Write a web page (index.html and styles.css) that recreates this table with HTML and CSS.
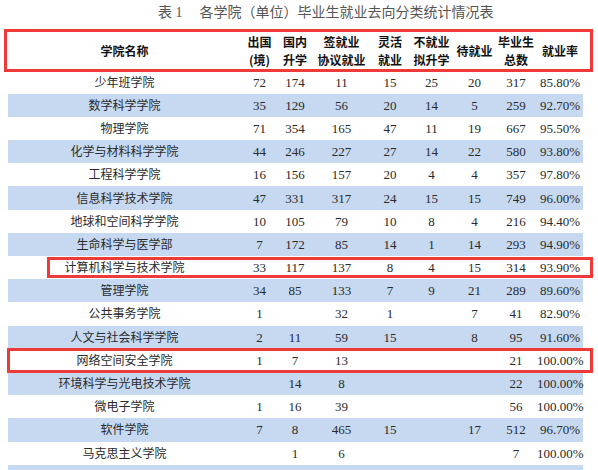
FILE: index.html
```html
<!DOCTYPE html>
<html lang="zh-CN">
<head>
<meta charset="utf-8">
<title>表1 各学院（单位）毕业生就业去向分类统计情况表</title>
<link rel="stylesheet" href="styles.css">
</head>
<body>
<div class="page">
  <div class="title">表 1<span class="gap"></span>各学院（单位）毕业生就业去向分类统计情况表</div>
  <table class="stats">
    <colgroup>
      <col class="c-name"><col class="c1"><col class="c2"><col class="c3"><col class="c4"><col class="c5"><col class="c6"><col class="c7"><col class="c8">
    </colgroup>
    <thead>
      <tr>
        <th><span class="ln">学院名称</span></th>
        <th><span class="ln">出国</span><span class="ln">(境)</span></th>
        <th><span class="ln">国内</span><span class="ln">升学</span></th>
        <th><span class="ln">签就业</span><span class="ln">协议就业</span></th>
        <th><span class="ln">灵活</span><span class="ln">就业</span></th>
        <th><span class="ln">不就业</span><span class="ln">拟升学</span></th>
        <th><span class="ln">待就业</span></th>
        <th><span class="ln">毕业生</span><span class="ln">总数</span></th>
        <th><span class="ln">就业率</span></th>
      </tr>
    </thead>
    <tbody>
      <tr><td>少年班学院</td><td>72</td><td>174</td><td>11</td><td>15</td><td>25</td><td>20</td><td>317</td><td>85.80%</td></tr>
      <tr><td>数学科学学院</td><td>35</td><td>129</td><td>56</td><td>20</td><td>14</td><td>5</td><td>259</td><td>92.70%</td></tr>
      <tr><td>物理学院</td><td>71</td><td>354</td><td>165</td><td>47</td><td>11</td><td>19</td><td>667</td><td>95.50%</td></tr>
      <tr><td>化学与材料科学学院</td><td>44</td><td>246</td><td>227</td><td>27</td><td>14</td><td>22</td><td>580</td><td>93.80%</td></tr>
      <tr><td>工程科学学院</td><td>16</td><td>156</td><td>157</td><td>20</td><td>4</td><td>4</td><td>357</td><td>97.80%</td></tr>
      <tr><td>信息科学技术学院</td><td>47</td><td>331</td><td>317</td><td>24</td><td>15</td><td>15</td><td>749</td><td>96.00%</td></tr>
      <tr><td>地球和空间科学学院</td><td>10</td><td>105</td><td>79</td><td>10</td><td>8</td><td>4</td><td>216</td><td>94.40%</td></tr>
      <tr><td>生命科学与医学部</td><td>7</td><td>172</td><td>85</td><td>14</td><td>1</td><td>14</td><td>293</td><td>94.90%</td></tr>
      <tr><td>计算机科学与技术学院</td><td>33</td><td>117</td><td>137</td><td>8</td><td>4</td><td>15</td><td>314</td><td>93.90%</td></tr>
      <tr><td>管理学院</td><td>34</td><td>85</td><td>133</td><td>7</td><td>9</td><td>21</td><td>289</td><td>89.60%</td></tr>
      <tr><td>公共事务学院</td><td>1</td><td></td><td>32</td><td>1</td><td></td><td>7</td><td>41</td><td>82.90%</td></tr>
      <tr><td>人文与社会科学学院</td><td>2</td><td>11</td><td>59</td><td>15</td><td></td><td>8</td><td>95</td><td>91.60%</td></tr>
      <tr><td>网络空间安全学院</td><td>1</td><td>7</td><td>13</td><td></td><td></td><td></td><td>21</td><td>100.00%</td></tr>
      <tr><td>环境科学与光电技术学院</td><td></td><td>14</td><td>8</td><td></td><td></td><td></td><td>22</td><td>100.00%</td></tr>
      <tr><td>微电子学院</td><td>1</td><td>16</td><td>39</td><td></td><td></td><td></td><td>56</td><td>100.00%</td></tr>
      <tr><td>软件学院</td><td>7</td><td>8</td><td>465</td><td>15</td><td></td><td>17</td><td>512</td><td>96.70%</td></tr>
      <tr><td>马克思主义学院</td><td></td><td>1</td><td>6</td><td></td><td></td><td></td><td>7</td><td>100.00%</td></tr>
      <tr><td></td><td></td><td></td><td></td><td></td><td></td><td></td><td></td><td></td></tr>
    </tbody>
  </table>
  <div class="mark mark-head"></div>
  <div class="mark mark-cs"></div>
  <div class="mark mark-sec"></div>
</div>
</body>
</html>
```
FILE: styles.css
```css
html, body {
  margin: 0;
  padding: 0;
  background: #ffffff;
}

.page {
  position: relative;
  width: 598px;
  height: 470px;
  overflow: hidden;
  font-family: "Liberation Serif", "Noto Sans CJK SC", serif;
  color: #2a2a2a;
}

.title {
  height: 26px;
  line-height: 26px;
  padding-left: 158px;
  margin-bottom: 5px;
  font-size: 14px;
  color: #555555;
  white-space: nowrap;
}

.title .gap {
  display: inline-block;
  width: 17px;
}

.stats {
  margin-left: 8px;
  width: 575px;
  border-collapse: collapse;
  border-spacing: 0;
  table-layout: fixed;
  font-size: 13px;
}

.c-name { width: 233px; }
.c1 { width: 37px; }
.c2 { width: 34px; }
.c3 { width: 59px; }
.c4 { width: 38px; }
.c5 { width: 45px; }
.c6 { width: 41px; }
.c7 { width: 42px; }
.c8 { width: 46px; }

.stats th {
  height: 39.5px;
  padding: 0;
  font-family: "Noto Sans CJK SC", sans-serif;
  font-weight: 700;
  font-size: 12px;
  color: #111111;
  text-align: center;
  vertical-align: middle;
  white-space: nowrap;
}

.stats th .ln {
  display: block;
  line-height: 17.5px;
}

.stats td {
  height: 23.2px;
  padding: 1px 0 0 0;
  box-sizing: border-box;
  text-align: center;
  vertical-align: middle;
  line-height: 16px;
  white-space: nowrap;
}

.stats td:first-child {
  font-size: 12px;
}

.stats tbody tr:nth-child(even) td {
  background: #c6d9f1;
}

.mark {
  position: absolute;
  border: 3px solid #ef3a3a;
  box-sizing: border-box;
}

.mark-head {
  left: 4px;
  top: 29px;
  width: 589px;
  height: 43px;
}

.mark-cs {
  left: 47px;
  top: 257px;
  width: 546px;
  height: 21px;
}

.mark-sec {
  left: 7px;
  top: 348px;
  width: 586px;
  height: 25px;
}
```
